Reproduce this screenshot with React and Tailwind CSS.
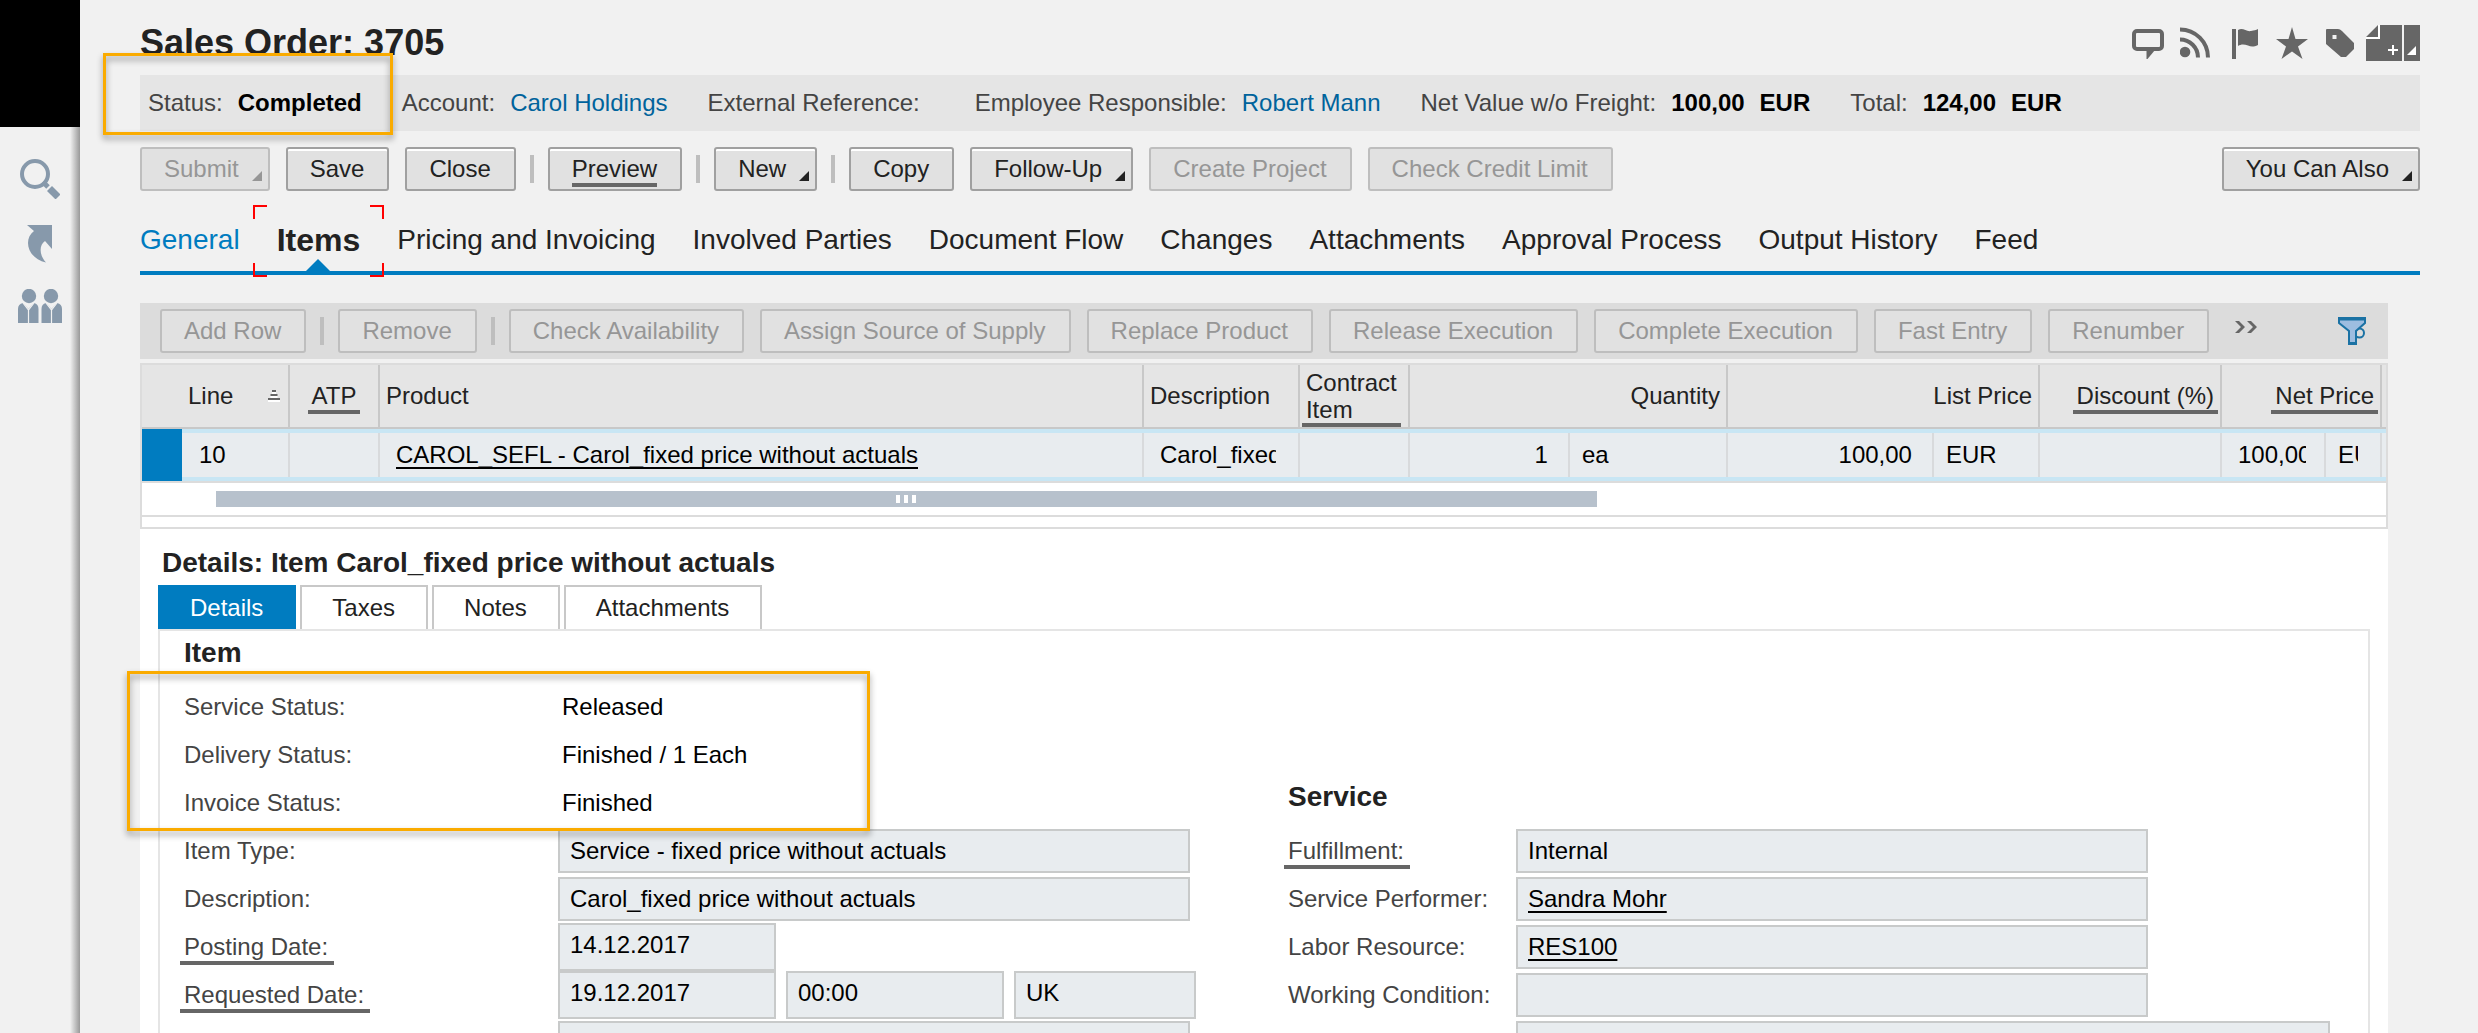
import React from 'react'
import clsx from 'clsx'

const summary = [
  { label: 'Status:', values: ['Completed'] },
  { label: 'Account:', link: 'Carol Holdings' },
  { label: 'External Reference:', values: [''] },
  { label: 'Employee Responsible:', link: 'Robert Mann' },
  { label: 'Net Value w/o Freight:', values: ['100,00', 'EUR'] },
  { label: 'Total:', values: ['124,00', 'EUR'] },
]

const tabs = [
  'General',
  'Items',
  'Pricing and Invoicing',
  'Involved Parties',
  'Document Flow',
  'Changes',
  'Attachments',
  'Approval Process',
  'Output History',
  'Feed',
]

const rowActions = [
  'Check Availability',
  'Assign Source of Supply',
  'Replace Product',
  'Release Execution',
  'Complete Execution',
  'Fast Entry',
  'Renumber',
]

function Button({ children, menu, disabled, marked }) {
  return (
    <button
      type="button"
      disabled={disabled}
      className={clsx(
        'relative h-11 shrink-0 whitespace-nowrap rounded-[3px] border-2 bg-[#e1e1e1] pl-[22px] leading-7',
        menu ? 'pr-[29px]' : 'pr-[23px]',
        disabled
          ? 'border-[#bebebe] text-[#969696]'
          : 'border-[#a0a0a0] text-[#222222] shadow-[inset_0_2px_0_#ffffff]'
      )}
    >
      <span className={clsx('block', marked && 'shadow-[0_4px_0_#666666]')}>{children}</span>
      {menu && (
        <svg viewBox="0 0 10 10" className="absolute bottom-2 right-1.5 size-2.5" fill="currentColor">
          <path d="M10 0V10H0Z" />
        </svg>
      )}
    </button>
  )
}

function Separator() {
  return <span className="-mx-0.5 h-7 w-1 shrink-0 bg-[#bebebe]" />
}

function Sidebar() {
  return (
    <aside className="flex w-20 shrink-0 flex-col">
      <div className="h-[127px] bg-black" />
      <nav className="relative flex flex-1 flex-col items-center gap-[25px] pt-8 text-[#8799ab]">
        <a href="#search" aria-label="Search">
          <svg viewBox="0 0 40 40" className="size-10" fill="none" stroke="currentColor">
            <circle cx="15" cy="15" r="13" strokeWidth="4" />
            <path d="M23 23L28 28" strokeWidth="5" />
            <path d="M29.5 29.5L38 38" strokeWidth="7" />
          </svg>
        </a>
        <a href="#shortcuts" aria-label="Shortcuts">
          <svg viewBox="0 0 40 40" className="size-10" fill="currentColor">
            <path d="M7 1H32V25L25 17C19 21 19 31 26 38.500C15 36 8 28 8 19C8 14 10 10 14 7Z" />
          </svg>
        </a>
        <a href="#people" aria-label="People">
          <svg viewBox="0 0 44 34" className="h-[34px] w-11" fill="currentColor">
            <circle cx="11" cy="7" r="7.200" />
            <circle cx="33" cy="7" r="7.200" />
            <path d="M0 34V20Q0 15 5 14L10.500 20L16 14Q20.500 15 20.500 20V34Z" />
            <path d="M23.500 34V20Q23.500 15 28 14L33.500 20L39 14Q44 15 44 20V34Z" />
            <path d="M5 14L10.500 21L16 14M10.500 20V34M28 14L33.500 21L39 14M33.500 20V34" fill="none" stroke="#f1f1f1" strokeWidth="1.200" />
          </svg>
        </a>
        <div className="absolute inset-y-0 right-0 w-2.5 bg-linear-to-r from-transparent to-[#999999]" />
      </nav>
    </aside>
  )
}

function HeaderIcons() {
  return (
    <div className="flex items-center gap-4 text-[#666666]">
      <a href="#comment" aria-label="Comment">
        <svg viewBox="0 0 32 32" className="size-8">
          <rect x="2" y="4" width="28" height="18" rx="3" fill="none" stroke="currentColor" strokeWidth="4" />
          <path d="M14.500 23H23L15.500 32H14.500Z" fill="currentColor" />
        </svg>
      </a>
      <a href="#feed" aria-label="Feed">
        <svg viewBox="0 0 32 32" className="size-8" fill="none" stroke="currentColor" strokeWidth="4">
          <circle cx="5" cy="25" r="5.300" fill="currentColor" stroke="none" />
          <path d="M0 12.500A18 18 0 0 1 18 30.500" />
          <path d="M0 2.500A28 28 0 0 1 28 30.500" />
        </svg>
      </a>
      <a href="#flag" aria-label="Flag">
        <svg viewBox="0 0 32 32" className="size-8" fill="currentColor">
          <path d="M4 2H8V32H4Z" />
          <path d="M10 3C15 0 18 5 23 4C26 3.500 28 3 30 2V18C26 20 23 20 20 18.500C16 17 13 17 10 19Z" />
        </svg>
      </a>
      <a href="#favorite" aria-label="Favorite">
        <svg viewBox="0 0 32 32" className="size-8" fill="currentColor">
          <path d="M16 0L19.500 12H32L22 19.500L26.500 32L16 24.500L5.500 32L10 19.500L0 12H12.500Z" />
        </svg>
      </a>
      <a href="#tag" aria-label="Tag">
        <svg viewBox="0 0 32 32" className="size-8" fill="currentColor" fillRule="evenodd">
          <path d="M3 2H14Q16 2 18 4L30 16V22L22 30H17L2 17V3Q2 2 3 2ZM8.500 8V12H12.500V8Z" />
        </svg>
      </a>
      <button type="button" aria-label="New document" className="-ml-1.5">
        <svg viewBox="0 0 54 36" className="h-9 w-[54px]">
          <path d="M12 0H36V36H0V12ZM38 0H54V36H38Z" fill="currentColor" />
          <path d="M13 0V13H0M22 25H32M27 20V30" fill="none" stroke="#ffffff" strokeWidth="2" />
          <path d="M50 21V30H41Z" fill="#ffffff" />
        </svg>
      </button>
    </div>
  )
}

function Highlight({ className }) {
  return (
    <div
      className={clsx(
        'pointer-events-none absolute z-10 border-[3px] border-[#faab00] drop-shadow-[0_4px_3px_rgba(0,0,0,0.4)]',
        className
      )}
    />
  )
}

function Summary() {
  return (
    <div className="relative flex h-14 shrink-0 items-center gap-10 whitespace-nowrap bg-[#e5e5e5] px-2 text-[#444444]">
      {summary.map(({ label, values, link }) => (
        <div key={label} className="flex gap-[15px]">
          <span>{label}</span>
          {link ? (
            <a href="#account" className="text-[#00639c]">{link}</a>
          ) : (
            values.map((v) => <b key={v} className="text-black">{v}</b>)
          )}
        </div>
      ))}
      <Highlight className="-left-[37px] -top-[22px] h-[82px] w-[290px]" />
    </div>
  )
}

function Corners() {
  return (
    <span className="absolute -inset-x-1.5 -bottom-1.5 -top-1">
      <i className="absolute left-0 top-0 size-3.5 border-l-2 border-t-2 border-[#ff0000]" />
      <i className="absolute right-0 top-0 size-3.5 border-r-2 border-t-2 border-[#ff0000]" />
      <i className="absolute bottom-0 left-0 size-3.5 border-b-2 border-l-2 border-[#ff0000]" />
      <i className="absolute bottom-0 right-0 size-3.5 border-b-2 border-r-2 border-[#ff0000]" />
    </span>
  )
}

function MainTabs() {
  return (
    <nav className="mt-[18px] flex shrink-0 gap-[37px] whitespace-nowrap border-b-4 border-[#007cc0] text-[28px] text-[#222222]">
      {tabs.map((tab) =>
        tab === 'Items' ? (
          <a key={tab} href="#items" className="relative -mx-[18px] flex h-[62px] items-center px-[18px] text-[32px] font-bold">
            {tab}
            <svg viewBox="0 0 24 12" className="absolute bottom-0 left-1/2 h-3 w-6 -translate-x-1/2" fill="#007cc0">
              <path d="M12 0L24 12H0Z" />
            </svg>
            <Corners />
          </a>
        ) : (
          <a key={tab} href="#tab" className={clsx('flex h-[62px] items-center', tab === 'General' && 'text-[#007cc0]')}>
            {tab}
          </a>
        )
      )}
    </nav>
  )
}

function ItemsToolbar() {
  return (
    <div className="mt-7 flex h-14 shrink-0 items-center gap-4 bg-[#dcdcdc] pl-5 pr-[22px]">
      <Button disabled>Add Row</Button>
      <Separator />
      <Button disabled>Remove</Button>
      <Separator />
      {rowActions.map((a) => (
        <Button key={a} disabled>{a}</Button>
      ))}
      <button type="button" aria-label="More actions" className="mb-2 ml-2.5">
        <svg viewBox="0 0 22 12" className="h-3 w-[22px]" fill="#666666">
          <path d="M0 0H4L10 6L4 12H0L6 6ZM12 0H16L22 6L16 12H12L18 6Z" />
        </svg>
      </button>
      <button type="button" aria-label="Filter" className="ml-auto">
        <svg viewBox="0 0 28 28" className="size-7" fill="#9dbde0" stroke="#1b72a4" strokeWidth="2">
          <circle cx="21.500" cy="16" r="4.500" fill="none" />
          <path d="M1 1H27V6L18 14V27H11V14L1 6Z" />
          <path d="M1 2H27M11 26.500H18" strokeWidth="3" />
        </svg>
      </button>
    </div>
  )
}

function Head({ children, right, marked, colSpan, className }) {
  return (
    <th colSpan={colSpan} className="border-b-2 border-[#c8c8c8] p-0 font-normal">
      <div
        className={clsx(
          'flex h-[62px] items-center border-r-2 border-[#c8c8c8] px-0.5',
          right && 'justify-end',
          className
        )}
      >
        <span className={clsx('px-1', marked && 'shadow-[0_4px_0_#666666]')}>{children}</span>
      </div>
    </th>
  )
}

function Cell({ children, className }) {
  return (
    <td className="border-y-4 border-[#c8e6f4] p-0">
      <div className={clsx('flex h-11 items-center border-r-2 border-[#d8dadc]', className)}>
        <span className="overflow-hidden whitespace-nowrap">{children}</span>
      </div>
    </td>
  )
}

function ItemsTable() {
  return (
    <div className="mt-1 shrink-0 border-2 border-[#dcdcdc] bg-white">
      <table className="w-full table-fixed border-separate border-spacing-0 text-left text-[#222222]">
        <colgroup>
          <col className="w-10" />
          <col className="w-[108px]" />
          <col className="w-[90px]" />
          <col />
          <col className="w-[156px]" />
          <col className="w-[110px]" />
          <col className="w-[160px]" />
          <col className="w-[158px]" />
          <col className="w-[206px]" />
          <col className="w-[106px]" />
          <col className="w-[182px]" />
          <col className="w-[104px]" />
          <col className="w-[56px]" />
          <col className="w-1" />
        </colgroup>
        <thead className="bg-[#e5e5e5]">
          <tr>
            <th colSpan={2} className="border-b-2 border-[#c8c8c8] p-0 font-normal">
              <div className="flex h-[62px] items-center justify-between border-r-2 border-[#c8c8c8] pl-[46px] pr-2">
                Line
                <svg viewBox="0 0 12 12" className="h-3 w-3">
                  <path d="M4 1H8M2.500 5H9.500M0 9H12" stroke="#666666" strokeWidth="2" />
                  <path d="M4 3H8M2.500 7H9.500M0 11H12" stroke="#ffffff" strokeWidth="2" />
                </svg>
              </div>
            </th>
            <Head marked className="justify-center">ATP</Head>
            <Head>Product</Head>
            <Head>Description</Head>
            <Head marked className="leading-[27px]">
              <span className="block w-min">Contract Item</span>
            </Head>
            <Head right colSpan={2}>Quantity</Head>
            <Head right colSpan={2}>List Price</Head>
            <Head right marked>Discount (%)</Head>
            <Head right marked colSpan={2}>Net Price</Head>
            <th className="border-b-2 border-[#c8c8c8] p-0" />
          </tr>
        </thead>
        <tbody className="bg-[#e8ecef] text-black">
          <tr>
            <td className="bg-[#007cc0] p-0" />
            <Cell className="pl-[17px]">10</Cell>
            <Cell />
            <Cell className="pl-4">
              <a href="#product" className="underline decoration-2 underline-offset-4 [text-decoration-skip-ink:none]">
                CAROL_SEFL - Carol_fixed price without actuals
              </a>
            </Cell>
            <Cell className="pl-4 pr-[22px]">Carol_fixed price</Cell>
            <Cell />
            <Cell className="justify-end pr-5">1</Cell>
            <Cell className="pl-3">ea</Cell>
            <Cell className="justify-end pr-5">100,00</Cell>
            <Cell className="pl-3">EUR</Cell>
            <Cell />
            <Cell className="pl-4 pr-[18px]">100,00</Cell>
            <Cell className="pl-3 pr-[22px]">EUR</Cell>
            <td className="border-y-4 border-[#c8e6f4] p-0" />
          </tr>
        </tbody>
      </table>
      <div className="flex h-9 items-center border-y-2 border-[#dcdcdc] pl-[74px]">
        <div className="flex h-4 w-7/11 items-center justify-center gap-1 bg-[#b7c1cc]">
          <i className="h-2 w-1 bg-white" />
          <i className="h-2 w-1 bg-white" />
          <i className="h-2 w-1 bg-white" />
        </div>
      </div>
      <div className="h-2.5" />
    </div>
  )
}

function Row({ label, marked, htmlFor, children }) {
  return (
    <div className="flex h-12 items-center">
      <div className="shrink-0 grow-0 basis-(--label)">
        {label && (
          <label
            htmlFor={htmlFor}
            className={clsx('-ml-1 inline-block px-1 align-top text-[#444444]', marked && 'pr-1.5 shadow-[0_4px_0_#666666]')}
          >
            {label}
          </label>
        )}
      </div>
      {children}
    </div>
  )
}

const box = 'border-2 border-[#c8caca] bg-[#e8ecef] px-2.5 text-black outline-none'

function TextRow({ label, id, value, marked, wide }) {
  return (
    <Row label={label} htmlFor={id} marked={marked}>
      <input id={id} aria-label={label ? undefined : id} readOnly value={value} className={clsx(box, 'h-11', wide ? 'w-[814px]' : 'w-[632px]')} />
    </Row>
  )
}

function LinkRow({ label, value }) {
  return (
    <Row label={label}>
      <div className={clsx(box, 'flex h-11 w-[632px] items-center')}>
        <a href="#value" className="underline decoration-2 underline-offset-4 [text-decoration-skip-ink:none]">{value}</a>
      </div>
    </Row>
  )
}

function StatusRow({ label, value }) {
  return (
    <Row label={label}>
      <span className="pl-1 text-black">{value}</span>
    </Row>
  )
}

function Heading({ children }) {
  return <h3 className="flex h-12 items-center pb-3 text-[28px] font-bold">{children}</h3>
}

function DetailTab({ children, active }) {
  return (
    <button
      type="button"
      className={clsx(
        'h-11 border-2 border-b-0 pl-[30px] pr-[31px]',
        active ? 'border-[#007cc0] bg-[#007cc0] text-white' : 'border-[#c8c8c8] bg-white'
      )}
    >
      {children}
    </button>
  )
}

function Details() {
  return (
    <section className="flex-1 bg-white px-[18px] pt-4 text-[#222222]">
      <h2 className="mb-1 pl-1 text-[28px] font-bold leading-9">Details: Item Carol_fixed price without actuals</h2>
      <div className="flex gap-1">
        <DetailTab active>Details</DetailTab>
        <DetailTab>Taxes</DetailTab>
        <DetailTab>Notes</DetailTab>
        <DetailTab>Attachments</DetailTab>
      </div>
      <div className="relative grid grid-cols-2 border-2 border-[#e5e5e5] pt-1">
        <div className="pl-6 [--label:374px]">
          <Heading>Item</Heading>
          <StatusRow label="Service Status:" value="Released" />
          <StatusRow label="Delivery Status:" value="Finished / 1 Each" />
          <StatusRow label="Invoice Status:" value="Finished" />
          <TextRow label="Item Type:" id="item-type" value="Service - fixed price without actuals" />
          <TextRow label="Description:" id="description" value="Carol_fixed price without actuals" />
          <Row label="Posting Date:" htmlFor="posting-date" marked>
            <input id="posting-date" readOnly value="14.12.2017" className={clsx(box, 'h-12 w-[218px] pb-1')} />
          </Row>
          <Row label="Requested Date:" htmlFor="requested-date" marked>
            <div className="flex gap-2.5">
              <input id="requested-date" readOnly value="19.12.2017" className={clsx(box, 'h-12 w-[218px] pb-1')} />
              <input aria-label="Requested time" readOnly value="00:00" className={clsx(box, 'h-12 w-[218px] pb-1')} />
              <input aria-label="Time zone" readOnly value="UK" className={clsx(box, 'h-12 w-[182px] pb-1')} />
            </div>
          </Row>
          <TextRow id="item-note" value="" />
        </div>
        <div className="pl-6 pt-36 [--label:228px]">
          <Heading>Service</Heading>
          <TextRow label="Fulfillment:" id="fulfillment" value="Internal" marked />
          <LinkRow label="Service Performer:" value="Sandra Mohr" />
          <LinkRow label="Labor Resource:" value="RES100" />
          <TextRow label="Working Condition:" id="working-condition" value="" />
          <TextRow id="service-note" value="" wide />
        </div>
        <Highlight className="-left-[33px] top-10 h-[160px] w-[743px]" />
      </div>
    </section>
  )
}

export default function App() {
  return (
    <div className="flex h-screen overflow-hidden bg-[#f1f1f1] font-['Liberation_Sans',Arial,sans-serif] text-[24px] leading-7">
      <Sidebar />
      <main className="flex min-w-0 flex-1 flex-col pl-[60px] pr-[58px]">
        <header className="flex h-[75px] shrink-0 items-center justify-between pt-[11px]">
          <h1 className="text-[36px] font-bold text-[#222222]">Sales Order: 3705</h1>
          <HeaderIcons />
        </header>
        <Summary />
        <div className="mt-4 flex shrink-0 items-center gap-4">
          <Button disabled menu>Submit</Button>
          <Button>Save</Button>
          <Button>Close</Button>
          <Separator />
          <Button marked>Preview</Button>
          <Separator />
          <Button menu>New</Button>
          <Separator />
          <Button>Copy</Button>
          <Button menu>Follow-Up</Button>
          <Button disabled>Create Project</Button>
          <Button disabled>Check Credit Limit</Button>
          <div className="ml-auto">
            <Button menu>You Can Also</Button>
          </div>
        </div>
        <MainTabs />
        <div className="mr-8 flex flex-1 flex-col">
          <ItemsToolbar />
          <ItemsTable />
          <Details />
        </div>
      </main>
    </div>
  )
}
